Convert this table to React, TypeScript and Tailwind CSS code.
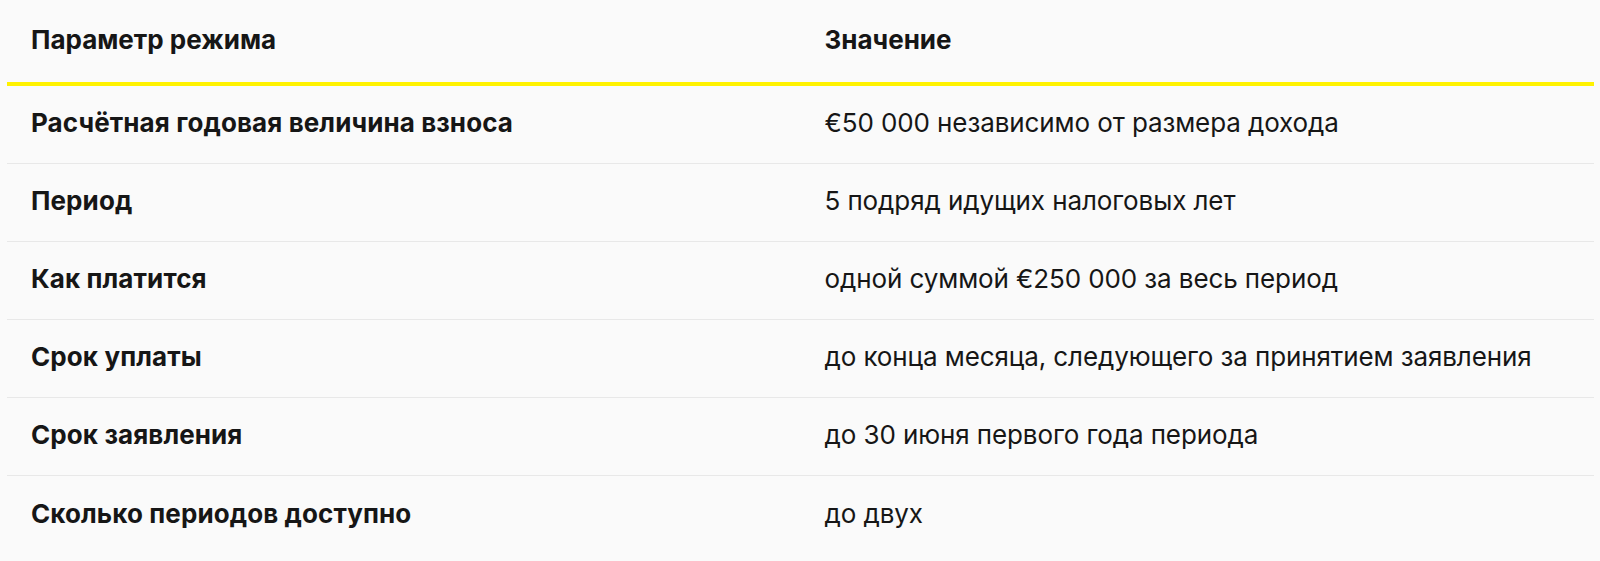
const rows = [
  { param: "Расчётная годовая величина взноса", value: "€50 000 независимо от размера дохода" },
  { param: "Период", value: "5 подряд идущих налоговых лет" },
  { param: "Как платится", value: "одной суммой €250 000 за весь период" },
  { param: "Срок уплаты", value: "до конца месяца, следующего за принятием заявления" },
  { param: "Срок заявления", value: "до 30 июня первого года периода" },
  { param: "Сколько периодов доступно", value: "до двух" },
]

export default function App() {
  return (
    <div className="h-[561px] overflow-hidden bg-[#fafafa] pl-[7px] pr-[6px] font-['Inter',sans-serif] text-[26px] leading-[32px] text-[#161616]">
      <div className="grid h-[86px] grid-cols-2 items-center border-b-[4px] border-[#fff200] pb-[2px] font-bold">
        <div className="px-6">Параметр режима</div>
        <div className="px-6">Значение</div>
      </div>
      {rows.map((row, i) => (
        <div
          key={row.param}
          className={
            "grid h-[78px] grid-cols-2 items-center pb-[3px] " +
            (i < rows.length - 1 ? "border-b border-[#e8e8e8]" : "")
          }
        >
          <div className="px-6 font-bold tracking-[0.1px]">{row.param}</div>
          <div className="px-6 tracking-[-0.1px]">{row.value}</div>
        </div>
      ))}
    </div>
  )
}
